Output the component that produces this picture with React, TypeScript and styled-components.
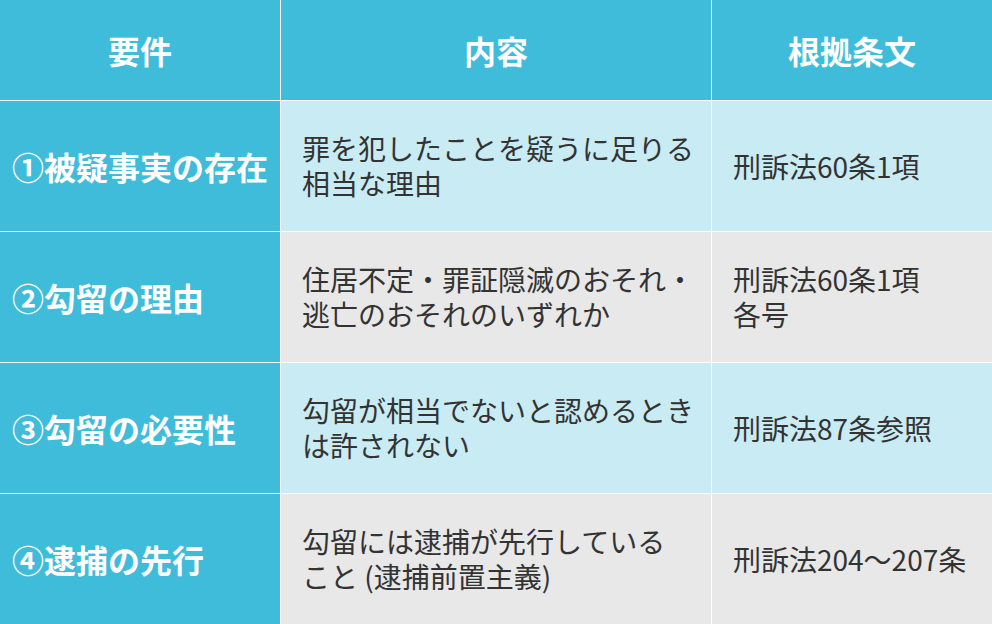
import React from "react";
import styled, { createGlobalStyle } from "styled-components";

const Global = createGlobalStyle`
  html, body { margin: 0; padding: 0; background: #ffffff; }
  body { font-family: "Noto Sans CJK JP", "Noto Sans", sans-serif; }
`;

const Table = styled.div`
  display: grid;
  grid-template-columns: 280px 430px 280px;
  grid-template-rows: 100px repeat(4, 130px);
  gap: 1px;
  background: #ffffff;
  width: 992px;
  height: 624px;
`;

const HeadCell = styled.div`
  background: #40bcdb;
  color: #ffffff;
  font-weight: 700;
  font-size: 32px;
  display: flex;
  align-items: center;
  justify-content: center;
  letter-spacing: 0;
`;

const LabelCell = styled.div`
  background: #40bcdb;
  color: #ffffff;
  font-weight: 700;
  font-size: 32px;
  display: flex;
  align-items: center;
  padding-left: 12px;
  white-space: nowrap;
`;

const BodyCell = styled.div<{ $alt: boolean }>`
  background: ${(p) => (p.$alt ? "#e8e8e8" : "#c9ebf3")};
  color: #333333;
  font-size: 28px;
  line-height: 35px;
  display: flex;
  align-items: center;
  padding-left: ${(p) => "21px"};
  white-space: nowrap;
`;

const rows = [
  {
    label: "①被疑事実の存在",
    content: ["罪を犯したことを疑うに足りる", "相当な理由"],
    law: ["刑訴法60条1項"],
  },
  {
    label: "②勾留の理由",
    content: ["住居不定・罪証隠滅のおそれ・", "逃亡のおそれのいずれか"],
    law: ["刑訴法60条1項", "各号"],
  },
  {
    label: "③勾留の必要性",
    content: ["勾留が相当でないと認めるとき", "は許されない"],
    law: ["刑訴法87条参照"],
  },
  {
    label: "④逮捕の先行",
    content: ["勾留には逮捕が先行している", "こと (逮捕前置主義)"],
    law: ["刑訴法204〜207条"],
  },
];

const Lines = ({ lines }: { lines: string[] }) => (
  <div>
    {lines.map((l, i) => (
      <React.Fragment key={i}>
        {i > 0 && <br />}
        {l}
      </React.Fragment>
    ))}
  </div>
);

export default function App() {
  return (
    <>
      <Global />
      <Table>
        <HeadCell>要件</HeadCell>
        <HeadCell>内容</HeadCell>
        <HeadCell>根拠条文</HeadCell>
        {rows.map((r, i) => (
          <React.Fragment key={i}>
            <LabelCell>{r.label}</LabelCell>
            <BodyCell $alt={i % 2 === 1}>
              <Lines lines={r.content} />
            </BodyCell>
            <BodyCell $alt={i % 2 === 1}>
              <Lines lines={r.law} />
            </BodyCell>
          </React.Fragment>
        ))}
      </Table>
    </>
  );
}
